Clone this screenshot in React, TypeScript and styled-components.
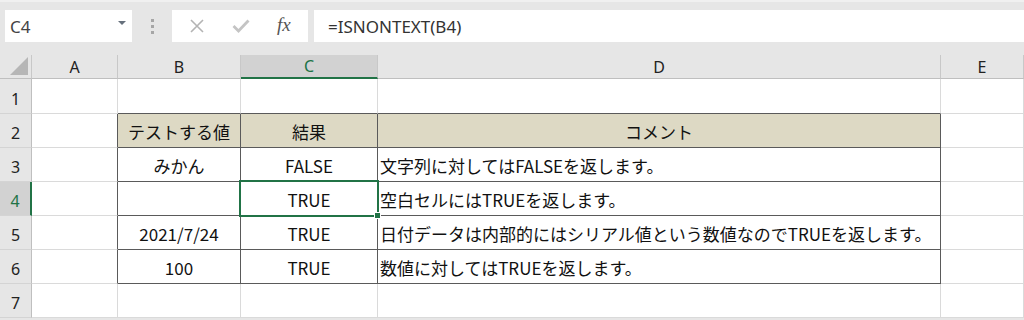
import React from "react";
import styled, { createGlobalStyle, css } from "styled-components";

const GlobalStyle = createGlobalStyle`
  body {
    margin: 0;
    background: #ffffff;
    overflow: hidden;
    font-family: "Noto Sans CJK JP", "Noto Sans", sans-serif;
  }
`;

const GREEN = "#217346";
const GRID = "#dadada";
const DARK = "#5a5a5a";

const Page = styled.div`
  width: 1024px;
  height: 320px;
  background: #e6e6e6;
  display: flex;
  flex-direction: column;
`;

// formula bar
const Toolbar = styled.div`
  height: 55px;
  box-sizing: border-box;
  padding: 10px 0 0 5px;
  display: flex;
  align-items: flex-start;
  border-top: 2px solid #f0f0f0;
`;

const NameBox = styled.div`
  width: 127px;
  height: 32px;
  margin-top: -2px;
  background: #fff;
  display: flex;
  align-items: center;
  justify-content: space-between;
  padding: 0 6px 0 5px;
  box-sizing: border-box;
  font-family: "Noto Sans", sans-serif;
  font-size: 17px;
  color: #444;
`;

const Caret = styled.span`
  width: 0;
  height: 0;
  border-left: 4px solid transparent;
  border-right: 4px solid transparent;
  border-top: 4px solid #66707c;
  margin-top: -6px;
`;

const Grip = styled.div`
  width: 40px;
  height: 32px;
  margin-top: -2px;
  display: flex;
  flex-direction: column;
  align-items: center;
  justify-content: center;
  gap: 3px;

  span {
    width: 3px;
    height: 3px;
    background: #a6a6a6;
  }
`;

const FxBox = styled.div`
  width: 136px;
  height: 32px;
  margin-top: -2px;
  background: #fff;
  display: flex;
  align-items: center;
  justify-content: space-around;
  padding: 0 4px;
  box-sizing: border-box;
`;

const FxLabel = styled.span`
  font-family: "Liberation Serif", serif;
  font-style: italic;
  font-size: 19px;
  color: #555;
  margin-top: -2px;
`;

const FormulaInput = styled.div`
  flex: 1;
  height: 32px;
  margin-top: -2px;
  margin-left: 6px;
  background: #fff;
  display: flex;
  align-items: center;
  padding-left: 14px;
  font-family: "Noto Sans", sans-serif;
  font-size: 17px;
  color: #333;
`;

// sheet
const Sheet = styled.div`
  display: grid;
  grid-template-columns: 32px 86px 123px 137px 563px 1fr;
  grid-template-rows: 24px 35px repeat(6, 34px);
  background: #fff;
`;

const Corner = styled.div`
  background: #e6e6e6;
  border-right: 1px solid #c8c8c8;
  border-bottom: 1px solid #bfbfbf;
  display: flex;
  align-items: flex-end;
  justify-content: flex-end;
  padding: 0 3px 3px 0;
`;

const ColHead = styled.div<{ $active?: boolean }>`
  background: ${(p) => (p.$active ? "#d2d2d2" : "#e6e6e6")};
  color: ${(p) => (p.$active ? GREEN : "#222")};
  border-right: 1px solid #c8c8c8;
  border-bottom: ${(p) => (p.$active ? `2px solid ${GREEN}` : "1px solid #bfbfbf")};
  display: flex;
  align-items: center;
  justify-content: center;
  font-family: "Noto Sans", sans-serif;
  font-size: 16px;
`;

const RowHead = styled.div<{ $active?: boolean }>`
  background: ${(p) => (p.$active ? "#d2d2d2" : "#e6e6e6")};
  color: ${(p) => (p.$active ? GREEN : "#222")};
  border-right: ${(p) => (p.$active ? `2px solid ${GREEN}` : "1px solid #bfbfbf")};
  border-bottom: 1px solid #d4d4d4;
  display: flex;
  align-items: flex-end;
  justify-content: center;
  padding-bottom: 3px;
  box-sizing: border-box;
  font-family: "Noto Sans", sans-serif;
  font-size: 16px;
`;

const Cell = styled.div<{
  $r?: boolean;
  $b?: boolean;
  $head?: boolean;
  $align?: "left" | "center";
  $selected?: boolean;
}>`
  position: relative;
  box-sizing: border-box;
  border-right: 1px solid ${(p) => (p.$r ? DARK : GRID)};
  border-bottom: 1px solid ${(p) => (p.$b ? DARK : GRID)};
  background: ${(p) => (p.$head ? "#ddd9c4" : "#fff")};
  display: flex;
  align-items: center;
  justify-content: ${(p) => (p.$align === "left" ? "flex-start" : "center")};
  padding: 1px 2px 0;
  font-size: 17px;
  color: #111;
  white-space: nowrap;

  ${(p) =>
    p.$selected &&
    css`
      z-index: 1;
      &::after {
        content: "";
        position: absolute;
        left: -2px;
        top: -2px;
        right: -2px;
        bottom: -2px;
        border: 2px solid ${GREEN};
        pointer-events: none;
      }
      &::before {
        content: "";
        position: absolute;
        right: -4px;
        bottom: -4px;
        width: 5px;
        height: 5px;
        background: ${GREEN};
        border: 1px solid #fff;
        z-index: 2;
      }
    `}
`;

const XIcon = () => (
  <svg width="16" height="16" viewBox="0 0 16 16">
    <path d="M2 2 L14 14 M14 2 L2 14" stroke="#b4b4b4" strokeWidth="1.6" />
  </svg>
);

const CheckIcon = () => (
  <svg width="18" height="14" viewBox="0 0 18 14">
    <path d="M1.5 7 L6.5 12 L16.5 1.5" stroke="#c4c4c4" strokeWidth="2.8" fill="none" />
  </svg>
);

const CornerMark = () => (
  <svg width="18" height="18" viewBox="0 0 18 18">
    <polygon points="18,0 18,18 0,18" fill="#b6b6b6" />
  </svg>
);

type Row = { b: string; c: string; d: string };

const rows: Row[] = [
  { b: "みかん", c: "FALSE", d: "文字列に対してはFALSEを返します。" },
  { b: "", c: "TRUE", d: "空白セルにはTRUEを返します。" },
  { b: "2021/7/24", c: "TRUE", d: "日付データは内部的にはシリアル値という数値なのでTRUEを返します。" },
  { b: "100", c: "TRUE", d: "数値に対してはTRUEを返します。" },
];

const App = () => (
  <Page>
    <GlobalStyle />
    <Toolbar>
      <NameBox>
        C4
        <Caret />
      </NameBox>
      <Grip>
        <span />
        <span />
        <span />
      </Grip>
      <FxBox>
        <XIcon />
        <CheckIcon />
        <FxLabel>fx</FxLabel>
      </FxBox>
      <FormulaInput>=ISNONTEXT(B4)</FormulaInput>
    </Toolbar>

    <Sheet>
      <Corner>
        <CornerMark />
      </Corner>
      <ColHead>A</ColHead>
      <ColHead>B</ColHead>
      <ColHead $active>C</ColHead>
      <ColHead>D</ColHead>
      <ColHead>E</ColHead>

      {/* row 1 */}
      <RowHead>1</RowHead>
      <Cell />
      <Cell $b />
      <Cell $b />
      <Cell $b />
      <Cell />

      {/* row 2: table header */}
      <RowHead>2</RowHead>
      <Cell $r />
      <Cell $r $b $head>テストする値</Cell>
      <Cell $r $b $head>結果</Cell>
      <Cell $r $b $head>コメント</Cell>
      <Cell />

      {rows.map((row, i) => (
        <React.Fragment key={i}>
          <RowHead $active={i === 1}>{i + 3}</RowHead>
          <Cell $r />
          <Cell $r $b>{row.b}</Cell>
          <Cell $r $b $selected={i === 1}>{row.c}</Cell>
          <Cell $r $b $align="left">{row.d}</Cell>
          <Cell />
        </React.Fragment>
      ))}

      {/* row 7 */}
      <RowHead>7</RowHead>
      <Cell />
      <Cell />
      <Cell />
      <Cell />
      <Cell />
    </Sheet>
  </Page>
);

export default App;
